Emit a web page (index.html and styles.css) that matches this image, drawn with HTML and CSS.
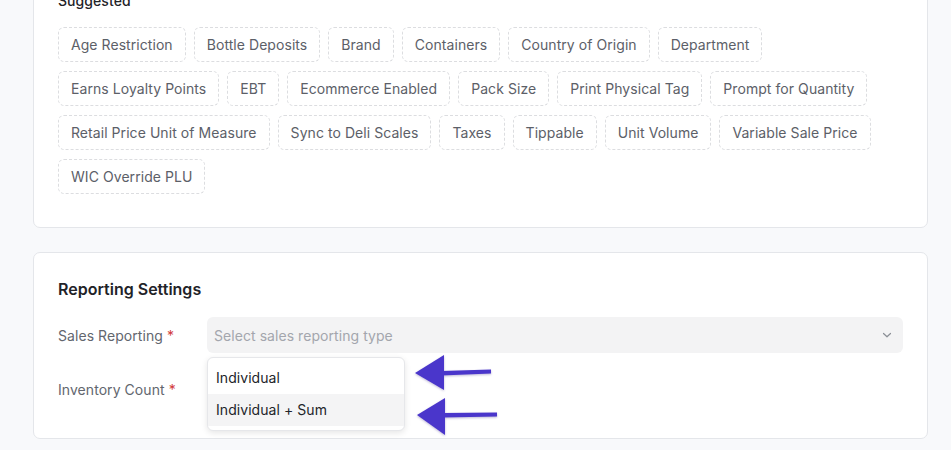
FILE: index.html
```html
<!DOCTYPE html>
<html lang="en">
<head>
    <meta charset="UTF-8">
    <meta name="viewport" content="width=device-width, initial-scale=1.0">
    <title>Item Settings</title>
    <link rel="stylesheet" href="styles.css">
</head>
<body>
    <div class="page">
        <!-- Suggested attributes -->
        <section class="card suggested">
            <div class="section-label">Suggested</div>
            <div class="chips">
                <span class="chip">Age Restriction</span>
                <span class="chip">Bottle Deposits</span>
                <span class="chip">Brand</span>
                <span class="chip">Containers</span>
                <span class="chip">Country of Origin</span>
                <span class="chip">Department</span>
                <span class="chip">Earns Loyalty Points</span>
                <span class="chip">EBT</span>
                <span class="chip">Ecommerce Enabled</span>
                <span class="chip">Pack Size</span>
                <span class="chip">Print Physical Tag</span>
                <span class="chip">Prompt for Quantity</span>
                <span class="chip">Retail Price Unit of Measure</span>
                <span class="chip">Sync to Deli Scales</span>
                <span class="chip">Taxes</span>
                <span class="chip">Tippable</span>
                <span class="chip">Unit Volume</span>
                <span class="chip">Variable Sale Price</span>
                <span class="chip">WIC Override PLU</span>
            </div>
        </section>

        <!-- Reporting -->
        <section class="card reporting">
            <h3>Reporting Settings</h3>
            <div class="field-row">
                <label>Sales Reporting <span class="req">*</span></label>
                <div class="select-wrap">
                    <div class="select">
                        <span class="placeholder">Select sales reporting type</span>
                        <svg class="chevron" width="12" height="12" viewBox="0 0 12 12">
                            <path d="M2.5 4.5 L6 7.8 L9.5 4.5" fill="none" stroke="#8b8f96" stroke-width="1.2" stroke-linecap="round" stroke-linejoin="round"/>
                        </svg>
                    </div>
                    <ul class="dropdown">
                        <li>Individual</li>
                        <li class="active">Individual + Sum</li>
                    </ul>
                </div>
            </div>
            <div class="field-row">
                <label>Inventory Count <span class="req">*</span></label>
                <div class="select-wrap"></div>
            </div>

            <!-- annotation arrows -->
            <svg class="arrows" width="92" height="90" viewBox="0 0 92 90">
                <g fill="#4a36cb">
                    <polygon points="4,22 33,4 33,39"/>
                    <polygon points="30,20 80,18.5 80,22.5 30,24.5"/>
                    <polygon points="6,64 34,47 34,84"/>
                    <polygon points="31,62 86,61.5 86,65.5 31,66.5"/>
                </g>
            </svg>
        </section>
    </div>
</body>
</html>
```

FILE: styles.css
```css
body {
    margin: 0;
    padding: 0;
    background-color: #f8f9fb;
    font-family: Inter, "Liberation Sans", sans-serif;
    font-size: 14px;
    letter-spacing: 0.06px;
    color: #1f2328;
    overflow: hidden;
}
.page {
    width: 895px;
    margin-left: 33px;
    margin-top: -34px; /* page is scrolled a bit */
}
.card {
    background-color: #fff;
    border: 1px solid #e4e6ea;
    border-radius: 7px;
    padding: 24px;
}
.suggested {
    padding-bottom: 33px;
}
.section-label {
    font-size: 14px;
    font-weight: 500;
    line-height: 20px;
    margin-bottom: 16px;
}
.chips {
    display: flex;
    flex-wrap: wrap;
    gap: 9px 8px;
}
.chip {
    box-sizing: border-box;
    height: 35px;
    line-height: 33px;
    padding: 0 12px;
    border: 1px dashed #dcdde0;
    border-radius: 6px;
    color: #5c6068;
    white-space: nowrap;
}
.reporting {
    position: relative;
    margin-top: 24px;
    padding-bottom: 31px;
}
.reporting h3 {
    margin: 0 0 16px 0;
    font-size: 16px;
    font-weight: 600;
    line-height: 24px;
    letter-spacing: 0;
    color: #1f2328;
}
.field-row {
    display: grid;
    grid-template-columns: 149px 1fr;
    align-items: center;
    height: 36px;
}
.field-row + .field-row {
    margin-top: 18px;
}
.field-row label {
    color: #62666e;
}
.req {
    color: #d13b3b;
}
.select-wrap {
    position: relative;
    height: 36px;
}
.select {
    display: flex;
    align-items: center;
    justify-content: space-between;
    height: 36px;
    padding: 0 10px 0 7px;
    background-color: #f3f3f4;
    border-radius: 6px;
}
.placeholder {
    color: #a3a6ad;
}
.dropdown {
    position: absolute;
    top: 40px;
    left: 0;
    width: 198px;
    box-sizing: border-box;
    margin: 0;
    padding: 4px 0;
    list-style: none;
    background-color: #fff;
    border: 1px solid #e6e7ea;
    border-radius: 6px;
    box-shadow: 0 2px 6px rgba(0, 0, 0, 0.1);
    z-index: 2;
}
.dropdown li {
    height: 32px;
    line-height: 32px;
    padding: 0 8px;
    color: #22252a;
}
.dropdown li.active {
    background-color: #f4f4f5;
}
.arrows {
    position: absolute;
    left: 377px;
    top: 98px;
    filter: drop-shadow(0 1px 1px rgba(40, 20, 120, 0.3));
    z-index: 3;
}
```
